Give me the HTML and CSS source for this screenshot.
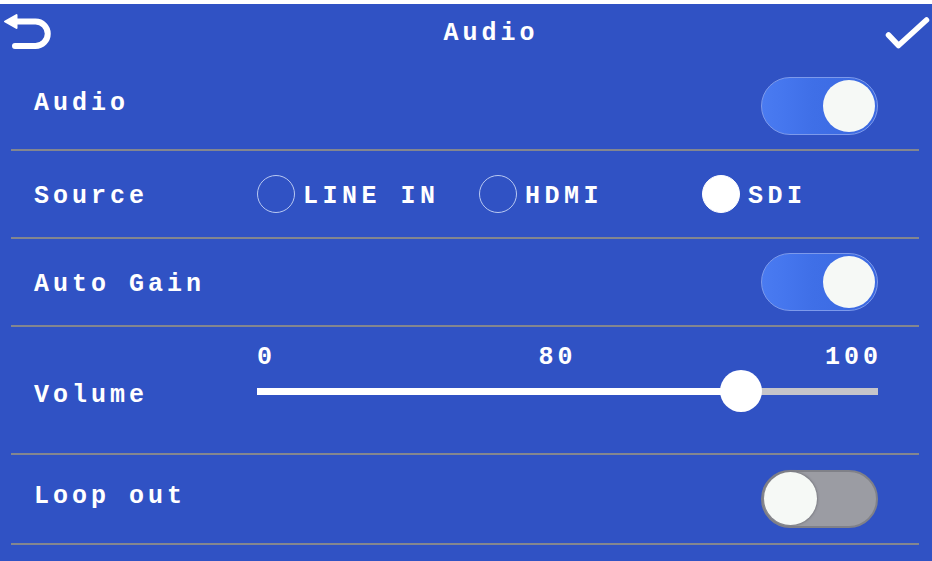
FILE: index.html
```html
<!DOCTYPE html>
<html lang="en">
<head>
  <meta charset="UTF-8">
  <title>Audio</title>
  <meta name="viewport" content="width=device-width, initial-scale=1.0">
  <link rel="stylesheet" href="styles.css">
</head>
<body>
  <div class="screen">

    <!-- header -->
    <div class="topbar">
      <svg class="icon-back" width="56" height="59" viewBox="0 4 56 59">
        <polygon points="5,21.5 16.5,15 16.5,28" fill="#fff" stroke="#fff" stroke-width="2" stroke-linejoin="round"/>
        <path d="M15 21.5 H35.5 A12.25 12.25 0 0 1 35.5 46 H15" fill="none" stroke="#fff" stroke-width="6" stroke-linecap="round"/>
      </svg>
      <div class="title">Audio</div>
      <svg class="icon-ok" width="56" height="59" viewBox="876 4 56 59">
        <path d="M888.5 35 L898.5 45.5 L926.5 20" fill="none" stroke="#fff" stroke-width="5.5" stroke-linecap="round" stroke-linejoin="round"/>
      </svg>
    </div>

    <div class="settings">
      <!-- Audio on/off -->
      <div class="row">
        <span class="label">Audio</span>
        <div class="toggle on"><span class="knob"></span></div>
      </div>

      <!-- Source -->
      <div class="row">
        <span class="label label-fixed">Source</span>
        <div class="radios">
          <div class="radio"><span class="dot"></span><span class="radio-text">LINE IN</span></div>
          <div class="radio"><span class="dot"></span><span class="radio-text">HDMI</span></div>
          <div class="radio checked"><span class="dot"></span><span class="radio-text">SDI</span></div>
        </div>
      </div>

      <!-- Auto gain -->
      <div class="row">
        <span class="label label-mid">Auto Gain</span>
        <div class="toggle on"><span class="knob"></span></div>
      </div>

      <!-- Volume -->
      <div class="row row-tall">
        <span class="label label-fixed">Volume</span>
        <div class="slider">
          <div class="scale">
            <span>0</span>
            <span>80</span>
            <span>100</span>
          </div>
          <div class="track-wrap">
            <div class="track">
              <div class="fill" style="width: 78%"></div>
              <span class="thumb" style="left: 78%"></span>
            </div>
          </div>
        </div>
      </div>

      <!-- Loop out -->
      <div class="row row-last">
        <span class="label">Loop out</span>
        <div class="toggle"><span class="knob"></span></div>
      </div>
    </div>

  </div>
</body>
</html>
```

FILE: styles.css
```css
body {
  margin: 0;
  background: #fff;
  font-family: 'Liberation Mono', 'DejaVu Sans Mono', monospace;
  font-weight: bold;
  color: #fff;
}

.screen {
  margin-top: 4px;
  height: 557px;
  background: #3052c4;
  overflow: hidden;
}

.topbar {
  display: flex;
  align-items: center;
  height: 59px;
}

.topbar svg {
  display: block;
  flex: none;
}

.title {
  flex: 1;
  text-align: center;
  padding-left: 50px;
  font-size: 25px;
  letter-spacing: 4px;
  margin-top: 0;
}

.settings {
  margin: 0 13px 0 11px;
}

.row {
  display: flex;
  align-items: center;
  justify-content: space-between;
  height: 86px;
  padding: 0 41px 0 23px;
  border-bottom: 2px solid #83868f;
}

.row-tall {
  height: 126px;
  justify-content: flex-start;
}

.row-last {
  height: 88px;
}

.label {
  font-size: 25px;
  letter-spacing: 4px;
  margin-top: -6px;
}

.label-fixed,
.label-mid {
  margin-top: 4px;
}

.label-fixed {
  width: 223px;
  flex: none;
}

.row-tall .label {
  margin-top: 10px;
}

/* toggles */
.toggle {
  position: relative;
  width: 115px;
  height: 56px;
  border-radius: 29px;
  border: 1px solid #7d9aeb;
  background: linear-gradient(to right, #4a7bf1 0%, #4576ee 20%, #3f6fe7 45%, #3a68e0 100%);
}

.toggle .knob {
  position: absolute;
  top: 2px;
  right: 2px;
  width: 52px;
  height: 52px;
  border-radius: 50%;
  background: #f6f9f6;
}

.toggle:not(.on) {
  border: 2px solid #808188;
  width: 113px;
  height: 54px;
  background: #9b9ca3;
}

.toggle:not(.on) .knob {
  right: auto;
  left: 1px;
  top: 0;
  width: 53px;
  height: 53px;
  box-shadow: 0 0 2px 1px #7c7d84;
}

/* radio buttons */
.radios {
  display: grid;
  grid-template-columns: 222px 223px 1fr;
  flex: 1;
}

.radio {
  display: flex;
  align-items: center;
  gap: 8px;
  font-size: 25px;
  letter-spacing: 4.5px;
}

.radio-text {
  margin-top: 4px;
}

.radio .dot {
  width: 36px;
  height: 36px;
  border-radius: 50%;
  border: 1px solid #b9c9f2;
  flex: none;
}

.radio.checked .dot {
  background: #fff;
  border-color: #fff;
}

/* volume slider */
.slider {
  flex: 1;
  padding-bottom: 22px;
}

.scale {
  display: flex;
  justify-content: space-between;
  height: 24px;
  line-height: 24px;
  font-size: 25px;
  letter-spacing: 4px;
  margin-right: -4px;
}

.scale span:nth-child(2) {
  margin-left: 14px;
}

.track-wrap {
  height: 42px;
  display: flex;
  align-items: center;
}

.track {
  position: relative;
  width: 100%;
  height: 7px;
  background: #c5c5ca;
}

.fill {
  height: 100%;
  background: #fff;
}

.thumb {
  position: absolute;
  top: 50%;
  width: 42px;
  height: 42px;
  margin: -21px 0 0 -21px;
  border-radius: 50%;
  background: #fff;
}
```
